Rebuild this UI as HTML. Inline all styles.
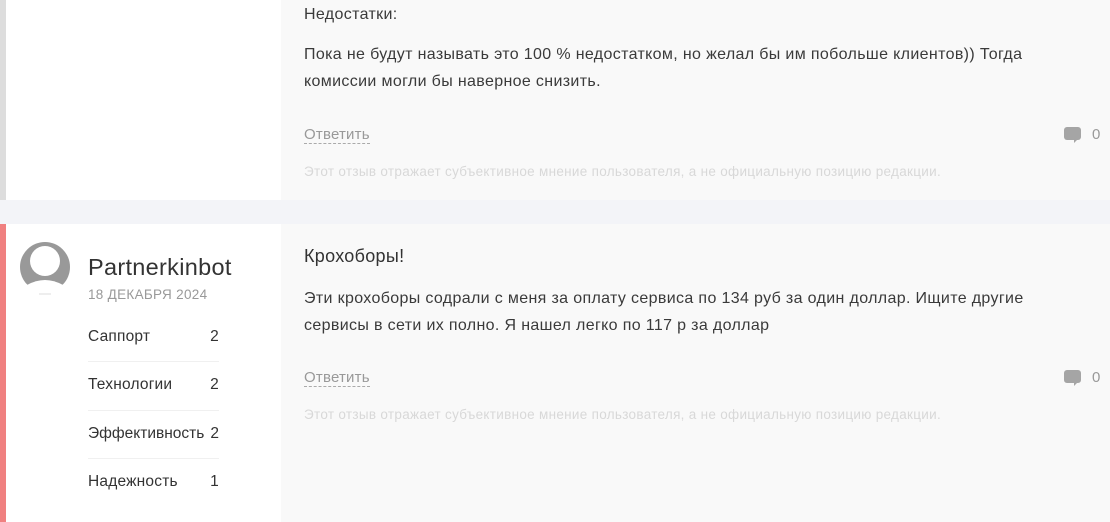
<!DOCTYPE html>
<html><head><meta charset="utf-8"><style>
*{margin:0;padding:0;box-sizing:border-box}
body{width:1110px;height:522px;overflow:hidden;background:#f3f4f8;font-family:"Liberation Sans",sans-serif;color:#333;position:relative}
.a{position:absolute}
.t{font-size:16px;color:#3a3a3a;letter-spacing:0.35px}
.reply{font-size:15px;color:#999;border-bottom:1px dashed #aaa;line-height:17px;letter-spacing:0.2px}
.disc{font-size:13.5px;color:#d8d8d8;letter-spacing:0.3px}
.cnt{font-size:15px;color:#999}
.bub{width:17px;height:13px;background:#a5a5a5;border-radius:3px}
.bub:after{content:"";position:absolute;left:10px;top:12px;border-left:4px solid #a5a5a5;border-bottom:4px solid transparent}
.row{position:absolute;left:88px;width:131px;font-size:15.5px;color:#333;display:flex;justify-content:space-between;letter-spacing:0.2px}
.sep{position:absolute;left:88px;width:131px;height:1px;background:#f0f0f0}
</style></head><body>
<div class="a" style="left:0;top:0;width:6px;height:200px;background:#ddd"></div>
<div class="a" style="left:6px;top:0;width:275px;height:200px;background:#fff"></div>
<div class="a" style="left:281px;top:0;width:829px;height:200px;background:#f9f9f9"></div>
<div class="a t" style="left:304px;top:6px">Недостатки:</div>
<div class="a t" style="left:304px;top:41px;line-height:27px;width:760px">Пока не будут называть это 100 % недостатком, но желал бы им побольше клиентов)) Тогда комиссии могли бы наверное снизить.</div>
<div class="a reply" style="left:304px;top:126px">Ответить</div>
<div class="a bub" style="left:1064px;top:127px"></div>
<div class="a cnt" style="left:1092px;top:126px">0</div>
<div class="a disc" style="left:304px;top:164px">Этот отзыв отражает субъективное мнение пользователя, а не официальную позицию редакции.</div>

<div class="a" style="left:0;top:224px;width:6px;height:298px;background:#f08080"></div>
<div class="a" style="left:6px;top:224px;width:275px;height:298px;background:#fff"></div>
<div class="a" style="left:281px;top:224px;width:829px;height:298px;background:#f9f9f9"></div>
<svg class="a" style="left:20px;top:242px" width="52" height="56" viewBox="0 0 52 56"><circle cx="25" cy="25" r="25" fill="#999"/><circle cx="25" cy="19" r="15" fill="#fff"/><path d="M7 43 Q25 33 43 43 L43 50 L7 50Z" fill="#fff"/><line x1="19" y1="52" x2="31" y2="52" stroke="#ddd"/></svg>
<div class="a" style="left:88px;top:254px;font-size:23.5px;color:#333;letter-spacing:0.3px">Partnerkinbot</div>
<div class="a" style="left:88px;top:287px;font-size:13.5px;color:#999;letter-spacing:0.3px">18 ДЕКАБРЯ 2024</div>
<div class="row" style="top:328px"><span>Саппорт</span><span>2</span></div>
<div class="sep" style="top:361px"></div>
<div class="row" style="top:376px"><span>Технологии</span><span>2</span></div>
<div class="sep" style="top:410px"></div>
<div class="row" style="top:425px;letter-spacing:0"><span>Эффективность</span><span>2</span></div>
<div class="sep" style="top:458px"></div>
<div class="row" style="top:473px"><span>Надежность</span><span>1</span></div>

<div class="a" style="left:304px;top:246px;font-size:18px;color:#333;letter-spacing:0.3px">Крохоборы!</div>
<div class="a t" style="left:304px;top:285px;line-height:27px;width:770px">Эти крохоборы содрали с меня за оплату сервиса по 134 руб за один доллар. Ищите другие сервисы в сети их полно. Я нашел легко по 117 р за доллар</div>
<div class="a reply" style="left:304px;top:369px">Ответить</div>
<div class="a bub" style="left:1064px;top:370px"></div>
<div class="a cnt" style="left:1092px;top:369px">0</div>
<div class="a disc" style="left:304px;top:407px">Этот отзыв отражает субъективное мнение пользователя, а не официальную позицию редакции.</div>
</body></html>
